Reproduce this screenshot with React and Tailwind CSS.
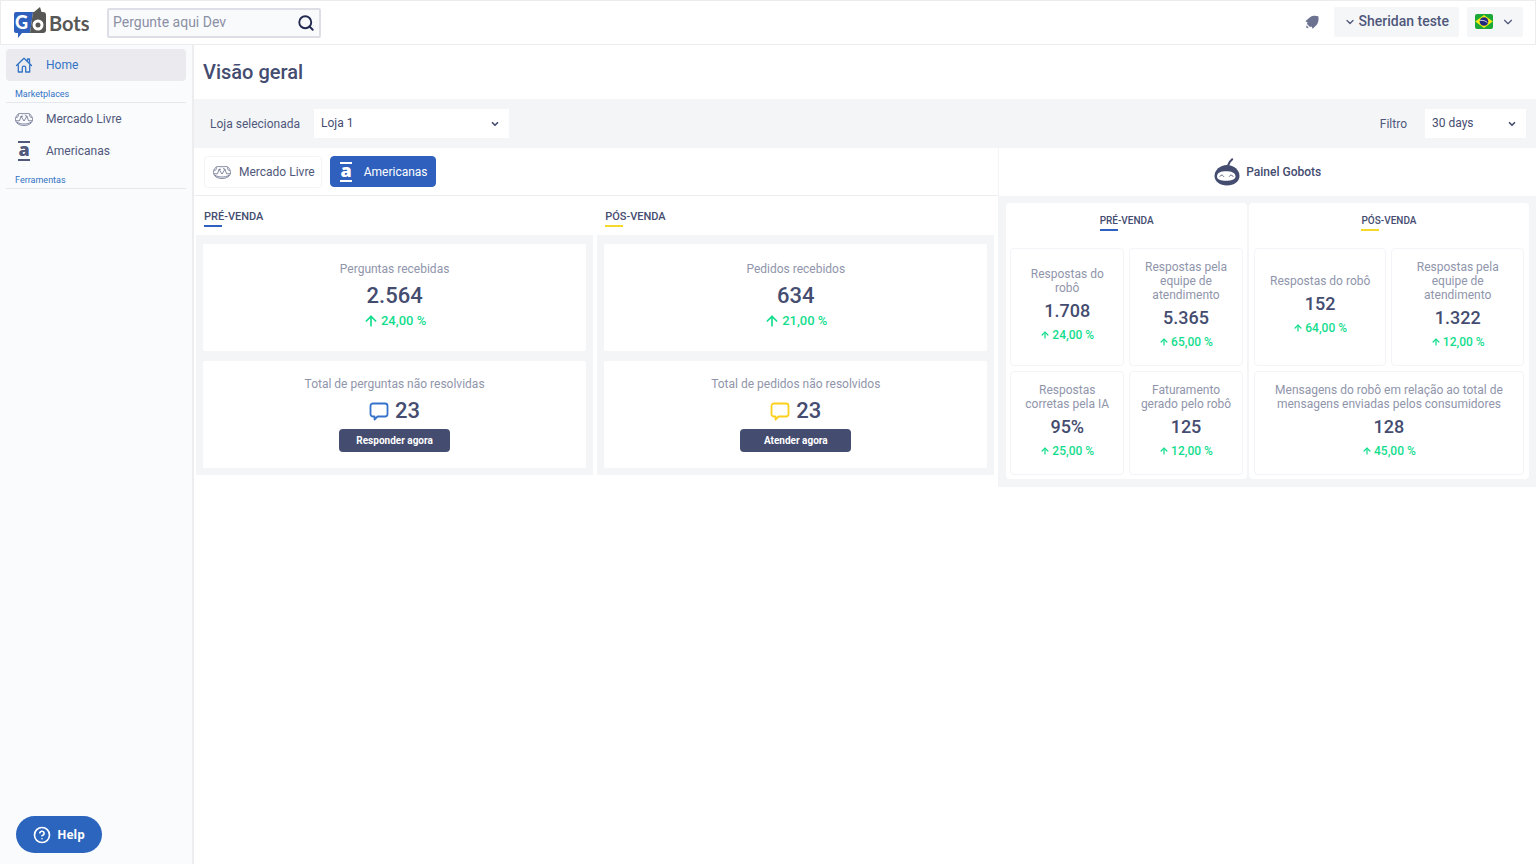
import React, { useState } from "react";
import { ArrowUp, ChevronDown, CircleHelp, Search } from "lucide-react";

const HandshakeIcon = ({ className }) => (
  <svg viewBox="0 0 36 28" fill="none" stroke="currentColor" strokeWidth="1.4" strokeLinejoin="round" className={className}>
    <path d="M6 4.500C8.500 2 12 3.500 18 3.500S27.500 2 30 4.500C33.500 7.500 35 11 35 15c0 7-7.500 12-17 12S1 22 1 15C1 11 2.500 7.500 6 4.500Z" />
    <path d="M6 4.500C8 9 6 10 2.500 11M30 4.500c-2 4.500 0 5.500 3.500 6.500M1.500 17.500H9l3-9 6 9.500 6-9.500 3 9h7.500" />
    <path d="M12 8.500h4M20 7l4 1.500M4 20.500c4 2.500 9 3.500 14 3.500s10-1 14-3.500" />
  </svg>
);

const AmericanasIcon = ({ className }) => (
  <svg viewBox="-2 -3 16 26" fill="currentColor" className={className}>
    <rect width="12" height="2" />
    <rect y="18" width="12" height="2" />
    <text x="6" y="15" textAnchor="middle" fontFamily="Open Sans, sans-serif" fontWeight="800" fontSize="18">
      a
    </text>
  </svg>
);

const HomeIcon = ({ className }) => (
  <svg viewBox="0 0 18 18" fill="none" stroke="currentColor" strokeWidth="1.3" strokeLinejoin="round" strokeLinecap="round" className={className}>
    <path d="M1.500 9.500 9 2.300l7.500 7.200M3.300 8.500V16h4v-4.200c0-1 .6-1.600 1.700-1.600s1.700.6 1.700 1.600V16h4V8.500M12.500 5.200V3h2v4" />
  </svg>
);

const BalloonIcon = ({ className }) => (
  <svg viewBox="0 0 20 19" fill="none" stroke="currentColor" strokeWidth="1.800" strokeLinejoin="round" className={className}>
    <path d="M4 1.500h12a2.500 2.500 0 0 1 2.500 2.500v8a2.500 2.500 0 0 1-2.500 2.500H8.500L5.500 17.500v-3H4A2.500 2.500 0 0 1 1.500 12V4A2.500 2.500 0 0 1 4 1.500Z" />
  </svg>
);

const RocketIcon = ({ className }) => (
  <svg viewBox="0 0 14 14" fill="currentColor" className={className}>
    <path d="M13.300 1.200C10 .3 7.500.6 5 2.200L.3 6.300l2.200 1L2 9l3 3 1.500-.5 1.200 2.300 4.300-4.300c1.500-2.500 2-5.300 1.300-8.300Z" />
    <path d="M1.500 10.300 3.500 12.300 3 13.300 2 12.800 1.500 13 1.300 12Z" />
  </svg>
);

const RobotIcon = ({ className }) => (
  <svg viewBox="0 0 26 28" className={className}>
    <path d="M13.800 8 15.800 3.800 18.200 1.300" fill="none" stroke="#444c70" strokeWidth="2" strokeLinecap="round" />
    <path d="M13 7c7 0 12.500 5 12.500 11 0 5.500-5.500 9.500-12.500 9.500S.5 23.500.5 18C.5 12 6 7 13 7Z" fill="#444c70" />
    <path d="M3 18.500c0-4 4-5.300 9-5.300s9.500 1.300 9.500 5.300c0 3-4.500 4.200-9.500 4.200S3 21.500 3 18.500Z" fill="#fff" />
    <path d="M5.800 18.700c.8-2 3-2 4 0M15.200 18.700c.8-2 3-2 4 0" fill="none" stroke="#444c70" strokeWidth="0.900" />
  </svg>
);

const Logo = () => (
  <svg viewBox="0 0 76 32" className="h-8 w-[76px]" role="img" aria-label="GoBots">
    <path d="M3 5h17l-3 21H9l-4 5v-5H3a2 2 0 0 1-2-2V7a2 2 0 0 1 2-2Z" fill="#2f60bd" />
    <path d="M20 5h1l6-5 1.500 5H30a3 3 0 0 1 3 3v15a3 3 0 0 1-3 3H17Z" fill="#575756" />
    <text x="2" y="22" fontFamily="Lato, sans-serif" fontWeight="900" fontSize="18" fill="#fff">G</text>
    <circle cx="25" cy="18" r="4" fill="none" stroke="#fff" strokeWidth="3" />
    <text x="36" y="24" fontFamily="Lato, sans-serif" fontWeight="700" fontSize="20" fill="#575756">Bots</text>
  </svg>
);

const BrazilFlag = () => (
  <svg viewBox="0 0 18 15" className="h-[15px] w-[18px]">
    <rect width="18" height="15" rx="2" fill="#1ba836" />
    <path d="M9 1 17.800 7.500 9 14 .2 7.500Z" fill="#f5ea14" />
    <circle cx="9" cy="7.500" r="4.300" fill="#22277f" />
    <path d="M5.200 6.500c2.500-.5 5.500.3 7.300 2.300" fill="none" stroke="#fff" strokeWidth="0.800" />
  </svg>
);

const NavItem = ({ icon, label, active }) => (
  <a
    href="#"
    className={`flex h-8 items-center rounded-sm text-[12px] ${
      active ? "bg-[#ebebef] text-[#3273c5]" : "text-[#50587b]"
    }`}
  >
    <span className="flex w-9 justify-center">{icon}</span>
    <span className="pl-1">{label}</span>
  </a>
);

const NavSection = ({ label }) => (
  <h2 className="flex h-[22px] items-center border-b border-[#e6e7eb] px-[9px] pt-1.5 text-[9px] text-[#3273c5]">
    {label}
  </h2>
);

const SectionTitle = ({ children, color, small }) => (
  <h3
    className={`font-medium leading-4 text-[#444c70] ${
      small ? "text-[10px]" : "text-[11px]"
    }`}
  >
    {children}
    <span className={`block h-0.5 w-[18px] ${color}`} />
  </h3>
);

const SummaryColumn = ({ title, color, received, total, percent, pending, pendingTotal, iconColor, action }) => (
  <section>
    <div className="h-[39px] px-2 pt-[13px]">
      <SectionTitle color={color}>{title}</SectionTitle>
    </div>
    <div className="flex flex-col gap-2.5 bg-[#f3f5f7] px-[7px] pt-[9px] pb-[7px]">
      <div className="flex h-[107px] flex-col items-center rounded-xs bg-white pt-4">
        <p className="text-[12px] leading-[18px] text-[#9095ab]">{received}</p>
        <strong className="mt-1 text-[22px] leading-7 font-medium">{total}</strong>
        <span className="mt-px flex items-center gap-0.5 text-[13px] leading-5 font-medium text-[#13dd8d]">
          <ArrowUp className="h-4 w-4" strokeWidth={2.5} />
          {percent}
        </span>
      </div>
      <div className="flex h-[107px] flex-col items-center rounded-xs bg-white pt-3.5">
        <p className="text-[12px] leading-[18px] text-[#9095ab]">{pending}</p>
        <div className="mt-1 flex items-center gap-1.5">
          <BalloonIcon className={`h-[19px] w-5 ${iconColor}`} />
          <strong className="text-[22px] leading-7 font-medium">{pendingTotal}</strong>
        </div>
        <button className="mt-1 h-[23px] w-[111px] rounded-[4px] bg-[#444c70] text-[10px] font-bold text-white">
          {action}
        </button>
      </div>
    </div>
  </section>
);

const PanelCard = ({ label, value, percent, className }) => (
  <div
    className={`flex flex-col items-center justify-center rounded-[4px] border border-[#f3f4f7] px-2.5 pb-0.5 text-center ${className}`}
  >
    <p className="text-[12px] leading-[14px] text-[#9095ab]">{label}</p>
    <strong className="mt-1 text-[18px] leading-6 font-medium text-[#444c70]">{value}</strong>
    <span className="mt-0.5 flex items-center gap-0.5 text-[12px] leading-5 font-medium text-[#13dd8d]">
      <ArrowUp className="h-2.5 w-2.5" strokeWidth={3} />
      {percent}
    </span>
  </div>
);

const App = () => {
  const [search, setSearch] = useState("");
  const [store, setStore] = useState("Loja 1");
  const [period, setPeriod] = useState("30 days");
  const [tab, setTab] = useState("americanas");

  const tabClass = (name) =>
    tab === name ? "border-[#2f60bd] bg-[#2f60bd] text-white" : "border-[#f3f4f7] text-[#50587b]";

  return (
    <div className="flex min-h-screen flex-col bg-white font-[Roboto,sans-serif] text-[#444c70]">
      <header className="flex h-[45px] items-center justify-between border border-[#ececee] px-3">
        <div className="flex items-center gap-[18px]">
          <a href="#">
            <Logo />
          </a>
          <form className="flex h-[30px] w-[214px] items-center rounded-xs border-2 border-[#dedfe6] bg-[#f9fafc] px-1">
            <input
              type="text"
              aria-label="Pergunte aqui"
              placeholder="Pergunte aqui Dev"
              value={search}
              onChange={(e) => setSearch(e.target.value)}
              className="w-full min-w-0 flex-1 pb-px text-[14px] outline-none placeholder:text-[#8b90a5]"
            />
            <button type="button" aria-label="Buscar">
              <Search className="h-[18px] w-[18px] text-[#222950]" strokeWidth={2.5} />
            </button>
          </form>
        </div>
        <div className="flex items-center pb-0.5">
          <button aria-label="Novidades" className="mr-[15px]">
            <RocketIcon className="h-3.5 w-3.5 text-[#6c7391]" />
          </button>
          <button className="flex h-[30px] items-center gap-0.5 rounded-xs bg-[#f5f6f8] px-2.5 text-[14px] font-medium text-[#50587b]">
            <ChevronDown className="h-3 w-3" strokeWidth={2.5} />
            Sheridan teste
          </button>
          <button aria-label="Idioma" className="ml-2 flex h-[30px] items-center gap-2 rounded-xs bg-[#f5f6f8] px-2">
            <BrazilFlag />
            <ChevronDown className="h-3.5 w-3.5 text-[#50587b]" strokeWidth={2} />
          </button>
        </div>
      </header>

      <div className="flex flex-1">
        <aside className="flex w-[194px] shrink-0 flex-col justify-between border-r-2 border-[#ededf0] bg-[#fafbfd] px-1.5 pt-1">
          <nav>
            <NavItem active label="Home" icon={<HomeIcon className="h-[18px] w-[18px]" />} />
            <NavSection label="Marketplaces" />
            <NavItem label="Mercado Livre" icon={<HandshakeIcon className="h-3.5 w-[18px]" />} />
            <NavItem label="Americanas" icon={<AmericanasIcon className="h-[26px] w-4" />} />
            <NavSection label="Ferramentas" />
          </nav>
          <button className="mb-[11px] ml-2.5 flex h-[37px] w-[86px] items-center justify-center gap-1.5 rounded-full bg-[#2c65bd] font-['Noto_Sans',sans-serif] text-[12px] font-bold text-white">
            <CircleHelp className="h-[18px] w-[18px]" strokeWidth={2.2} />
            Help
          </button>
        </aside>

        <main className="min-w-0 flex-1">
          <h1 className="flex h-[54px] items-center px-[9px] text-[20px] font-medium">Visão geral</h1>

          <div className="flex h-[49px] items-center justify-between bg-[#f3f5f7] pr-2.5 pl-4 text-[12px]">
            <div className="flex items-center gap-3.5">
              <label htmlFor="store" className="text-[#50587b]">
                Loja selecionada
              </label>
              <div className="relative">
                <select
                  id="store"
                  value={store}
                  onChange={(e) => setStore(e.target.value)}
                  className="h-[29px] w-[195px] appearance-none bg-white px-[7px] pb-0.5"
                >
                  <option>Loja 1</option>
                </select>
                <ChevronDown className="pointer-events-none absolute top-2.5 right-2 h-2.5 w-3" strokeWidth={4} />
              </div>
            </div>
            <div className="flex items-center gap-[18px]">
              <label htmlFor="period" className="text-[#50587b]">
                Filtro
              </label>
              <div className="relative">
                <select
                  id="period"
                  value={period}
                  onChange={(e) => setPeriod(e.target.value)}
                  className="h-[29px] w-[101px] appearance-none bg-white px-[7px] pb-0.5"
                >
                  <option>30 days</option>
                </select>
                <ChevronDown className="pointer-events-none absolute top-2.5 right-2 h-2.5 w-3" strokeWidth={4} />
              </div>
            </div>
          </div>

          <div className="grid grid-cols-[805fr_538fr] items-start">
            <div>
              <div className="flex h-12 items-center gap-2 border-b border-[#ededf0] px-2.5 text-[12px]">
                <button
                  onClick={() => setTab("mercado")}
                  className={`flex h-8 items-center gap-2 rounded-[4px] border pr-1.5 pl-2 whitespace-nowrap ${tabClass("mercado")}`}
                >
                  <HandshakeIcon className="h-3.5 w-[18px] shrink-0" />
                  Mercado Livre
                </button>
                <button
                  onClick={() => setTab("americanas")}
                  className={`flex h-[31px] items-center gap-2.5 rounded-[4px] border px-[7px] whitespace-nowrap ${tabClass("americanas")}`}
                >
                  <AmericanasIcon className="h-[26px] w-4 shrink-0" />
                  Americanas
                </button>
              </div>
              <div className="grid grid-cols-2 gap-1 pr-1 pl-0.5">
                <SummaryColumn
                  title="PRÉ-VENDA"
                  color="bg-[#2f60bd]"
                  received="Perguntas recebidas"
                  total="2.564"
                  percent="24,00 %"
                  pending="Total de perguntas não resolvidas"
                  pendingTotal="23"
                  iconColor="text-[#3572cb]"
                  action="Responder agora"
                />
                <SummaryColumn
                  title="PÓS-VENDA"
                  color="bg-[#f4d928]"
                  received="Pedidos recebidos"
                  total="634"
                  percent="21,00 %"
                  pending="Total de pedidos não resolvidos"
                  pendingTotal="23"
                  iconColor="text-[#fcd01c]"
                  action="Atender agora"
                />
              </div>
            </div>

            <aside className="border-l border-[#f3f4f7]">
              <div className="flex h-12 items-center justify-center gap-1.5 text-[12px] font-medium">
                <RobotIcon className="h-7 w-[26px]" />
                Painel Gobots
              </div>
              <div className="flex gap-0.5 bg-[#f3f5f7] px-[7px] pt-[7px] pb-2">
                <section className="flex-[241] rounded-[4px] bg-white px-1 pb-1">
                  <div className="flex h-[45px] justify-center pt-2.5">
                    <SectionTitle small color="bg-[#2f60bd]">PRÉ-VENDA</SectionTitle>
                  </div>
                  <div className="grid grid-cols-2 gap-[5px]">
                    <PanelCard className="h-[118px]" label="Respostas do robô" value="1.708" percent="24,00 %" />
                    <PanelCard className="h-[118px]" label="Respostas pela equipe de atendimento" value="5.365" percent="65,00 %" />
                    <PanelCard className="h-[104px]" label="Respostas corretas pela IA" value="95%" percent="25,00 %" />
                    <PanelCard className="h-[104px]" label="Faturamento gerado pelo robô" value="125" percent="12,00 %" />
                  </div>
                </section>
                <section className="flex-[280] rounded-[4px] bg-white px-[5px] pb-1">
                  <div className="flex h-[45px] justify-center pt-2.5">
                    <SectionTitle small color="bg-[#f4d928]">PÓS-VENDA</SectionTitle>
                  </div>
                  <div className="grid grid-cols-2 gap-[5px]">
                    <PanelCard className="h-[118px]" label="Respostas do robô" value="152" percent="64,00 %" />
                    <PanelCard className="h-[118px]" label="Respostas pela equipe de atendimento" value="1.322" percent="12,00 %" />
                    <PanelCard
                      className="col-span-2 h-[104px]"
                      label="Mensagens do robô em relação ao total de mensagens enviadas pelos consumidores"
                      value="128"
                      percent="45,00 %"
                    />
                  </div>
                </section>
              </div>
            </aside>
          </div>
        </main>
      </div>
    </div>
  );
};

export default App;
